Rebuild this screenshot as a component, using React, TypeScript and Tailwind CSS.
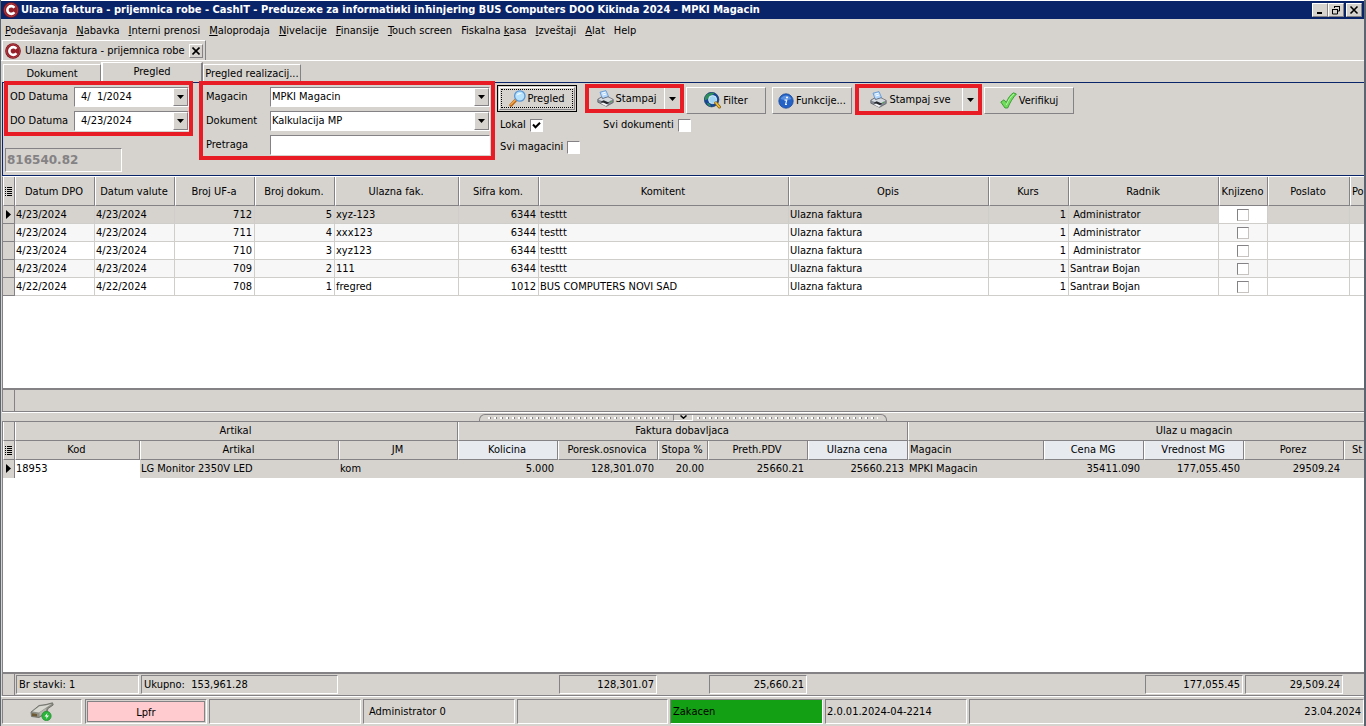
import type { ReactNode } from "react";
import { useState } from "react";

const menuItems = [
  ["", "P", "odešavanja"],
  ["", "N", "abavka"],
  ["", "I", "nterni prenosi"],
  ["", "M", "aloprodaja"],
  ["", "N", "ivelacije"],
  ["", "F", "inansije"],
  ["", "T", "ouch screen"],
  ["Fiskalna ", "k", "asa"],
  ["", "I", "zveštaji"],
  ["", "A", "lat"],
  ["Help", "", ""],
];

const documentColumns = [
  { label: "Datum DPO", width: "w-20" },
  { label: "Datum valute", width: "w-20" },
  { label: "Broj UF-a", width: "w-20" },
  { label: "Broj dokum.", width: "w-20" },
  { label: "Ulazna fak.", width: "w-[124px]" },
  { label: "Sifra kom.", width: "w-20" },
  { label: "Komitent", width: "w-[250px]" },
  { label: "Opis", width: "w-[200px]" },
  { label: "Kurs", width: "w-20" },
  { label: "Radnik", width: "w-[150px]" },
  { label: "Knjizeno", width: "w-[49px]" },
  { label: "Poslato", width: "w-[82px]" },
];

const documents = [
  { date: "4/23/2024", uf: "712", no: "5", invoice: "xyz-123", code: "6344", client: "testtt", user: " Administrator" },
  { date: "4/23/2024", uf: "711", no: "4", invoice: "xxx123", code: "6344", client: "testtt", user: " Administrator" },
  { date: "4/23/2024", uf: "710", no: "3", invoice: "xyz123", code: "6344", client: "testtt", user: " Administrator" },
  { date: "4/23/2024", uf: "709", no: "2", invoice: "111", code: "6344", client: "testtt", user: "Santraи Bojan" },
  { date: "4/22/2024", uf: "708", no: "1", invoice: "fregred", code: "1012", client: "BUS COMPUTERS NOVI SAD", user: "Santraи Bojan" },
];

const itemColumns = [
  { label: "Kod", width: "w-[125px]", value: "18953", total: "Br stavki: 1" },
  { label: "Artikal", width: "w-[199px]", value: "LG Monitor 2350V LED", total: "Ukupno:  153,961.28" },
  { label: "JM", width: "w-[119px]", value: "kom" },
  { label: "Kolicina", width: "w-[100px]", value: "5.000", right: true, blue: true },
  { label: "Poresk.osnovica", width: "w-[100px]", value: "128,301.070", right: true, total: "128,301.07" },
  { label: "Stopa %", width: "w-[50px]", value: "20.00", right: true },
  { label: "Preth.PDV", width: "w-[100px]", value: "25660.21", right: true, total: "25,660.21" },
  { label: "Ulazna cena", width: "w-[100px]", value: "25660.213", right: true, blue: true },
  { label: "Magacin", width: "w-[136px]", value: "MPKI Magacin", left: true },
  { label: "Cena MG", width: "w-[100px]", value: "35411.090", right: true, blue: true },
  { label: "Vrednost MG", width: "w-[100px]", value: "177,055.450", right: true, blue: true, total: "177,055.45" },
  { label: "Porez", width: "w-[100px]", value: "29509.24", right: true, total: "29,509.24" },
];

const raised = "border border-t-white border-l-white border-r-[#848284] border-b-[#848284]";
const sunken = "border border-t-[#848284] border-l-[#848284] border-r-white border-b-white";
const headCell = "border-b border-b-[#848284] border-r border-r-[#848284] border-l border-l-white pt-px pr-[2px] font-normal";
const dots = "h-[2px] flex-1 bg-[linear-gradient(90deg,#fff_2px,#848284_2px,#848284_3px,transparent_3px)] bg-[length:6px_2px]";

function Logo() {
  return (
    <svg className="h-4 w-4 shrink-0" viewBox="0 0 16 16">
      <circle cx="8" cy="8" r="7.8" fill="#7d1019" />
      <circle cx="8" cy="8" r="6.7" fill="#96202a" stroke="#b9474c" strokeWidth=".7" />
      <path d="M11.400 5.700A3.900 3.900 0 1 0 11.400 10.300" fill="none" stroke="#fff" strokeWidth="2.600" />
    </svg>
  );
}

function PrinterIcon() {
  return (
    <svg className="h-[17px] w-[17px] shrink-0" viewBox="0 0 17 17">
      <path d="M3 2.200 9 .6l2.600 6-6.200 2.200z" fill="#b4d6fa" stroke="#5a92d0" strokeWidth=".8" />
      <path d="M5 3.200 8.500 2.300M5.600 5l3.600-1" stroke="#fff" strokeWidth=".9" />
      <path d="M.8 9.200 4.500 7l1.200 1.600L11 6.900l5.200 2.500v3.200L9.500 16.300.8 12.200z" fill="#868b95" stroke="#50545c" strokeWidth=".7" />
      <path d="M1.300 9.400 9.500 13 15.700 9.500 11 7.300 5.500 9 4.400 7.600z" fill="#d5d9e0" />
      <path d="m3.500 12 5.500 2.600 3.400-1.800-5.800-2.600z" fill="#24272c" />
      <path d="m4 13.600 4.800 2.300 2.200-1.200-5-2.200z" fill="#f4f5f7" />
      <circle cx="13.500" cy="11.600" r=".8" fill="#4ca54b" />
    </svg>
  );
}

function MagnifierIcon() {
  return (
    <svg className="h-[17px] w-[17px] shrink-0" viewBox="0 0 17 17">
      <path d="M7.400 9.400 2 15.200" stroke="#b86518" strokeWidth="3.200" strokeLinecap="round" />
      <path d="M7 9.200 1.900 14.600" stroke="#f3a64a" strokeWidth="1.500" strokeLinecap="round" />
      <circle cx="10.800" cy="6" r="5.200" fill="#b8e2fb" stroke="#5b98d8" strokeWidth="1.300" />
      <path d="M7.500 5.600c.6-2.400 3.700-3.600 5.500-1.600-2 0-3.700.5-5.500 1.600z" fill="#f2fbff" />
    </svg>
  );
}

function GlobeIcon() {
  return (
    <svg className="h-[17px] w-[17px] shrink-0" viewBox="0 0 17 17">
      <circle cx="7.600" cy="7.600" r="7.300" fill="#164696" stroke="#10305f" strokeWidth=".6" />
      <path d="M2 3.500C4 .8 8 .2 10.500 1.200 8.500 3 7 3 5.500 5 4 7 3 8 1 8 .8 6 1 5 2 3.500zM3 11c2-.5 3 .5 4 3.600C5 14.500 3.500 13 3 11z" fill="#2f8f5a" />
      <circle cx="8.600" cy="7.600" r="4" fill="#9fd4f3" stroke="#d9eefa" strokeWidth="1" />
      <path d="m11.800 10.800 3.600 4.200" stroke="#8a5d10" strokeWidth="3" strokeLinecap="round" />
      <path d="m11.800 10.800 3.400 4" stroke="#f0c23a" strokeWidth="1.600" strokeLinecap="round" />
    </svg>
  );
}

function InfoIcon() {
  return (
    <svg className="h-4 w-4 shrink-0" viewBox="0 0 16 16">
      <circle cx="8" cy="8" r="7.200" fill="#2462c6" stroke="#1b4a9b" strokeWidth=".8" />
      <path d="M2.500 6A6 6 0 0 1 13.500 6C10 7.500 6 7.500 2.500 6z" fill="#5b90df" />
      <circle cx="9" cy="4.600" r="1" fill="#fff" />
      <path d="M6.500 7.200h2.200L7.600 11.500h1.400" fill="none" stroke="#e9f1fd" strokeWidth="1.200" />
    </svg>
  );
}

function CheckIcon() {
  return (
    <svg className="h-[17px] w-[17px] shrink-0" viewBox="0 0 17 17">
      <path d="M.8 10 4 7.800 6.300 10.500C8 6 10.500 2.500 13.500.8L16.400 2C13 5.500 10 10.500 7.700 16H5z" fill="#6fdc5b" stroke="#38962f" strokeWidth=".9" strokeLinejoin="round" />
      <path d="M6.300 13c2-5 4.500-8.500 7.700-11" fill="none" stroke="#b5f3a6" strokeWidth="1" />
    </svg>
  );
}

function PlugIcon() {
  return (
    <svg className="h-[19px] w-6" viewBox="0 0 24 19">
      <path d="M1 10 9 3.500 16 2.500 22.500.8 23.200 3 18 6.500 16.500 11 9 15.500 1.500 14.500z" fill="#8f9087" stroke="#66675f" strokeWidth=".8" />
      <path d="m2.500 9.500 7-5.200 6-.8 6-1.400-4.500 3-8 5.400z" fill="#d9d9d2" />
      <path d="m9.500 10.500 7-4.500-1 4.500-6 3.800z" fill="#b5b5ad" />
      <path d="m2 11.300 5 .6v2.600l-5-.6z" fill="#6e5b33" />
      <circle cx="16.500" cy="14" r="4.700" fill="#2bb53b" stroke="#1a8628" strokeWidth=".6" />
      <path d="m17.500 11-3 3.500h2.200L16 17l3-3.600h-2.200z" fill="#fff" />
    </svg>
  );
}

function DownArrow() {
  return (
    <svg className="h-1 w-[7px]" viewBox="0 0 7 4">
      <path d="M0 0h7L3.500 4z" />
    </svg>
  );
}

function RowMarker() {
  return (
    <svg className="mx-auto h-[9px] w-[5px]" viewBox="0 0 5 9">
      <path d="M0 0v9l5-4.500z" />
    </svg>
  );
}

function ColumnsIcon() {
  return (
    <svg className="mx-auto h-[9px] w-[7px]" viewBox="0 0 7 9" stroke="#000">
      <path d="M0 .5h1M2 .5h5M0 2.500h1M2 2.500h5M0 4.500h1M2 4.500h5M0 6.500h1M2 6.500h5M0 8.500h1M2 8.500h5" />
    </svg>
  );
}

function Tick({ label, id, checked = false }: { label: string; id: string; checked?: boolean }) {
  const [on, setOn] = useState(checked);
  return (
    <div className="flex h-[14px] items-center gap-1">
      <label htmlFor={id}>{label}</label>
      <span className="grid">
        <input
          id={id}
          type="checkbox"
          checked={on}
          onChange={() => setOn(!on)}
          className={`col-start-1 row-start-1 h-[13px] w-[13px] appearance-none bg-white ${sunken}`}
        />
        {on && (
          <svg className="pointer-events-none col-start-1 row-start-1 h-[13px] w-[13px]" viewBox="0 0 13 13">
            <path d="m3 5.500 2.500 2.700L10 3.700" fill="none" stroke="#000" strokeWidth="2" />
          </svg>
        )}
      </span>
    </div>
  );
}

function DateField({ id, label, value }: { id: string; label: string; value: string }) {
  return (
    <div className="flex h-5 items-center">
      <label htmlFor={id} className="w-16 shrink-0">{label}</label>
      <div className={`flex h-5 min-w-0 flex-1 bg-white ${sunken}`}>
        <input id={id} defaultValue={value} className="min-w-0 flex-1 whitespace-pre pl-[6px] outline-none" />
        <button aria-label={label} className={`flex w-[15px] items-center justify-center bg-[#d6d3ce] ${raised}`}>
          <DownArrow />
        </button>
      </div>
    </div>
  );
}

function Combo({ id, label, value }: { id: string; label: string; value: string }) {
  return (
    <div className="flex h-5 items-center">
      <label htmlFor={id} className="w-16 shrink-0">{label}</label>
      <div className={`grid h-5 min-w-0 flex-1 bg-white ${sunken}`}>
        <select id={id} className="col-start-1 row-start-1 appearance-none pl-px outline-none">
          <option>{value}</option>
        </select>
        <span className={`pointer-events-none col-start-1 row-start-1 flex w-[15px] items-center justify-center justify-self-end bg-[#d6d3ce] ${raised}`}>
          <DownArrow />
        </span>
      </div>
    </div>
  );
}

function ToolButton({ icon, children, className }: { icon: ReactNode; children: ReactNode; className: string }) {
  return (
    <button className={`flex h-[27px] items-center justify-center gap-[2px] ${raised} ${className}`}>
      {icon}
      {children}
    </button>
  );
}

function SplitButton({ label, className }: { label: string; className: string }) {
  return (
    <div className={`flex ring-4 ring-[#e81c24] ${className}`}>
      <button className="flex flex-1 items-center justify-center gap-[2px]">
        <PrinterIcon />
        {label}
      </button>
      <button aria-label={`${label} opcije`} className="flex w-4 items-center justify-center border-l border-white">
        <DownArrow />
      </button>
    </div>
  );
}

function WindowButton({ label, children }: { label: string; children: ReactNode }) {
  return (
    <button aria-label={label} className={`flex h-[14px] w-4 items-center justify-center bg-[#d6d3ce] ${raised}`}>
      <svg className="h-[10px] w-[10px]" viewBox="0 0 10 10" fill="none" stroke="#000">
        {children}
      </svg>
    </button>
  );
}

function DocumentGrid() {
  const cell = "overflow-hidden border-b border-r border-[#d0cecb] pl-px pr-[2px] pt-px";
  return (
    <section className="flex flex-[235] flex-col border-l border-t border-[#848284] border-t-white">
      <div className="flex-1 overflow-hidden border-b-2 border-[#848284] bg-white">
        <table className="w-full table-fixed border-separate border-spacing-0 whitespace-pre leading-[16px]">
          <colgroup>
            <col className="w-3" />
            {documentColumns.map((c) => <col key={c.label} className={c.width} />)}
            <col />
          </colgroup>
          <thead className="bg-[#d6d3ce]">
            <tr className="h-[29px]">
              <th aria-label="Kolone" className={headCell}><ColumnsIcon /></th>
              {documentColumns.map((c) => <th key={c.label} className={headCell}>{c.label}</th>)}
              <th className="overflow-hidden border-b border-l border-b-[#848284] border-l-white pl-px pt-px text-left font-normal">Po</th>
            </tr>
          </thead>
          <tbody>
            {documents.map((d, i) => (
              <tr key={d.uf} className={`h-[18px] ${i === 0 ? "bg-[#d6d3ce]" : i % 2 ? "bg-[#f7f7f7]" : "bg-white"}`}>
                <td className="border-b border-r border-[#848284] bg-[#d6d3ce]">{i === 0 && <RowMarker />}</td>
                <td className={cell}>{d.date}</td>
                <td className={cell}>{d.date}</td>
                <td className={`${cell} text-right`}>{d.uf}</td>
                <td className={`${cell} text-right`}>{d.no}</td>
                <td className={cell}>{d.invoice}</td>
                <td className={`${cell} text-right`}>{d.code}</td>
                <td className={cell}>{d.client}</td>
                <td className={cell}>Ulazna faktura</td>
                <td className={`${cell} text-right`}>1</td>
                <td className={cell}>{d.user}</td>
                <td className={`${cell} ${i === 0 ? "bg-white" : ""}`}>
                  <input type="checkbox" aria-label={`Knjizeno ${d.uf}`} className="mx-auto block h-3 w-3 appearance-none border border-[#c6c3c0] border-l-[#848284] border-t-[#848284] bg-white" />
                </td>
                <td className={cell} />
                <td className="border-b border-[#d0cecb]" />
              </tr>
            ))}
          </tbody>
        </table>
      </div>
      <div className="flex h-[22px] border-b border-[#848284]">
        <div className="w-3 border-r border-[#848284]" />
      </div>
    </section>
  );
}

function ItemGrid() {
  return (
    <section className="flex flex-[275] flex-col overflow-hidden border-l border-t border-[#848284]">
      <div className="flex-1 overflow-hidden border-b-2 border-[#848284] bg-white">
        <table className="w-[calc(100%+118px)] table-fixed border-separate border-spacing-0 whitespace-pre leading-[16px]">
          <colgroup>
            <col className="w-3" />
            {itemColumns.map((c) => <col key={c.label + c.value} className={c.width} />)}
            <col />
          </colgroup>
          <thead className="bg-[#d6d3ce]">
            <tr className="h-[19px]">
              <th aria-label="Izbor" className={headCell} />
              <th colSpan={3} className={headCell}>Artikal</th>
              <th colSpan={5} className={headCell}>Faktura dobavljaca</th>
              <th colSpan={5} className={headCell}>Ulaz u magacin</th>
            </tr>
            <tr className="h-[19px]">
              <th aria-label="Kolone" className={headCell}><ColumnsIcon /></th>
              {itemColumns.map((c) => (
                <th key={c.label} className={`${headCell} ${c.blue ? "bg-[#e7ebf0]" : ""} ${c.left ? "pl-px text-left" : ""}`}>{c.label}</th>
              ))}
              <th className={`${headCell} pl-[7px] text-left`}>St</th>
            </tr>
          </thead>
          <tbody>
            <tr className="h-[18px] bg-[#d6d3ce]">
              <td className="border-r border-[#848284]"><RowMarker /></td>
              {itemColumns.map((c, i) => (
                <td key={c.label} className={`pl-px ${c.right ? "pr-1 text-right" : ""} ${i === 0 ? "bg-white" : ""}`}>{c.value}</td>
              ))}
              <td />
            </tr>
          </tbody>
        </table>
      </div>
      <div className="flex h-[22px] shrink-0 whitespace-pre border-b border-[#848284]">
        <div className="w-3 shrink-0 border-r border-[#848284]" />
        {itemColumns.map((c) => (
          <div key={c.label} className={`shrink-0 py-px pl-px pr-px ${c.width}`}>
            {c.total && (
              <div className={`h-[19px] px-[2px] leading-[17px] ${sunken} ${c.right ? "text-right" : ""}`}>{c.total}</div>
            )}
          </div>
        ))}
      </div>
    </section>
  );
}

export default function App() {
  return (
    <div className="flex h-screen flex-col overflow-hidden border-l border-r-2 border-[#5d6670] bg-[#d6d3ce] font-['Tahoma','DejaVu_Sans_Condensed','DejaVu_Sans',sans-serif] text-[11px] leading-[14px] text-black">
      <header className="flex h-[19px] shrink-0 items-center border-t border-white bg-[#0a246a] px-[2px] text-white">
        <Logo />
        <h1 className="flex-1 truncate pl-[2px] font-bold leading-4">
          Ulazna faktura - prijemnica robe - CashIT - Preduzeже za informatiиki inħinjering BUS Computers DOO Kikinda 2024 - MPKI Magacin
        </h1>
        <WindowButton label="Minimize"><path d="M2 8h5" strokeWidth="2" /></WindowButton>
        <WindowButton label="Restore">
          <path d="M3 1.500h6M3.500 1v2M8.500 1v5H7M1 4.500h6M1.500 4v5h5V4" />
        </WindowButton>
        <div className="ml-[2px] flex">
          <WindowButton label="Close"><path d="m1.500 1.500 7 7m0-7-7 7" strokeWidth="1.600" /></WindowButton>
        </div>
      </header>

      <nav className="flex h-[21px] shrink-0 items-center gap-[9px] whitespace-pre px-1 pt-[2px]">
        {menuItems.map(([before, key, after]) => (
          <a key={before + key + after} href="#">
            {before}
            <span className="underline">{key}</span>
            {after}
          </a>
        ))}
      </nav>

      {/* open document tab */}
      <div className="flex h-[21px] shrink-0 border-b border-white pl-px">
        <div className="flex items-center border-l border-r border-t border-white border-r-[#848284] pl-[2px] pr-[2px]">
          <Logo />
          <span className="px-1">Ulazna faktura - prijemnica robe</span>
          <button aria-label="Zatvori" className={`flex h-[14px] w-[14px] items-center justify-center ${raised}`}>
            <svg className="h-2 w-2" viewBox="0 0 8 8" stroke="#000" strokeWidth="1.600">
              <path d="m.5.5 7 7m0-7-7 7" />
            </svg>
          </button>
        </div>
      </div>

      <div role="tablist" className="flex h-[21px] shrink-0 items-end pl-[2px]">
        <button role="tab" className={`h-[18px] w-[98px] border-b-0 ${raised}`}>Dokument</button>
        <button role="tab" aria-selected className="h-5 w-[102px] border-l-2 border-r-2 border-t border-white border-r-[#848284] pb-[2px]">Pregled</button>
        <button role="tab" className={`h-[18px] w-[98px] whitespace-nowrap border-b-0 ${raised}`}>Pregled realizacij...</button>
      </div>

      {/* filters and actions */}
      <main className="flex min-h-0 flex-1 flex-col pl-px">
        <section className="flex h-[94px] shrink-0 items-start border-y border-l border-[#0a246a] pl-[2px] pt-[2px]">
          <div>
            <div className="mx-[3px] flex h-[47px] w-[181px] flex-col gap-1 pl-[2px] pt-[2px] ring-4 ring-[#e81c24]">
              <DateField id="od" label="OD Datuma" value="4/  1/2024" />
              <DateField id="do" label="DO Datuma" value="4/23/2024" />
            </div>
            <input
              aria-label="Iznos"
              readOnly
              value="816540.82"
              className={`mt-4 block h-6 w-[117px] px-px font-['DejaVu_Sans'] text-[12px] font-bold text-[#848284] ${sunken}`}
            />
          </div>
          <div className="ml-[11px] flex h-[71px] w-[288px] flex-col gap-1 pl-[3px] pr-px pt-[2px] ring-4 ring-[#e81c24]">
            <Combo id="magacin" label="Magacin" value="MPKI Magacin" />
            <Combo id="dokument" label="Dokument" value="Kalkulacija MP" />
            <div className="flex h-5 items-center">
              <label htmlFor="pretraga" className="w-16 shrink-0">Pretraga</label>
              <input id="pretraga" className={`h-5 min-w-0 flex-1 bg-white px-1 outline-none ${sunken}`} />
            </div>
          </div>

          <div className="ml-[6px] flex flex-col gap-2">
            <div className="flex h-[25px] items-start">
              <button className="h-[27px] w-20 border border-black p-px">
                <span className={`flex h-full items-center justify-center ${raised}`}>
                  <span className="flex h-[19px] w-[72px] items-center justify-center gap-px border border-dotted border-black">
                    <MagnifierIcon />
                    Pregled
                  </span>
                </span>
              </button>
              <SplitButton label="Stampaj" className="ml-3 mt-[3px] h-[21px] w-[91px]" />
              <div className="ml-[6px] mt-[2px] flex gap-[6px]">
                <ToolButton icon={<GlobeIcon />} className="w-20">Filter</ToolButton>
                <ToolButton icon={<InfoIcon />} className="w-20">Funkcije...</ToolButton>
              </div>
              <SplitButton label="Stampaj sve" className="ml-[7px] mt-[3px] h-[23px] w-[119px]" />
              <div className="ml-[6px] mt-[2px]">
                <ToolButton icon={<CheckIcon />} className="w-[90px]">Verifikuj</ToolButton>
              </div>
            </div>
            <div className="flex pl-[3px]">
              <div className="w-[103px]"><Tick id="lokal" label="Lokal" checked /></div>
              <Tick id="svi-dokumenti" label="Svi dokumenti" />
            </div>
            <div className="pl-[3px]"><Tick id="svi-magacini" label="Svi magacini" /></div>
          </div>
        </section>

        <DocumentGrid />

        {/* splitter */}
        <div className="flex h-[9px] shrink-0 items-end justify-center border-t border-white">
          <div className="flex h-[7px] w-[408px] items-center gap-1 rounded-t-md border border-b-0 border-[#848284] px-2">
            <span className={dots} />
            <button aria-label="Sakrij" className="flex h-full w-5 items-center justify-center border-b border-l border-r border-white border-l-[#848284]">
              <svg className="h-1 w-[7px]" viewBox="0 0 7 4" fill="none" stroke="#000" strokeWidth="1.500">
                <path d="m.5.5 3 2.700 3-2.700" />
              </svg>
            </button>
            <span className={dots} />
          </div>
        </div>

        <ItemGrid />
      </main>

      <footer className="flex h-[30px] shrink-0 items-center gap-[2px] border-t border-white pl-px">
        <button className={`mr-px flex h-[25px] w-20 items-center justify-center ${sunken}`} aria-label="Veza">
          <PlugIcon />
        </button>
        <div className={`h-[25px] w-[122px] p-px ${sunken}`}>
          <div className="h-full border border-[#848284] bg-[#ffcbce] text-center leading-[21px]">Lpfr</div>
        </div>
        <div className={`h-[25px] w-[152px] ${sunken}`} />
        <div className={`h-[25px] w-[152px] px-[5px] leading-[23px] ${sunken}`}>Administrator 0</div>
        <div className={`h-[25px] w-[151px] ${sunken}`} />
        <div className={`h-[25px] w-[153px] bg-[#14a014] px-[2px] leading-[23px] ${sunken}`}>Zakacen</div>
        <div className={`h-[25px] w-[142px] px-px leading-[23px] ${sunken}`}>2.0.01.2024-04-2214</div>
        <div className={`h-[25px] flex-1 px-[2px] text-right leading-[23px] ${sunken}`}>23.04.2024</div>
      </footer>
    </div>
  );
}
